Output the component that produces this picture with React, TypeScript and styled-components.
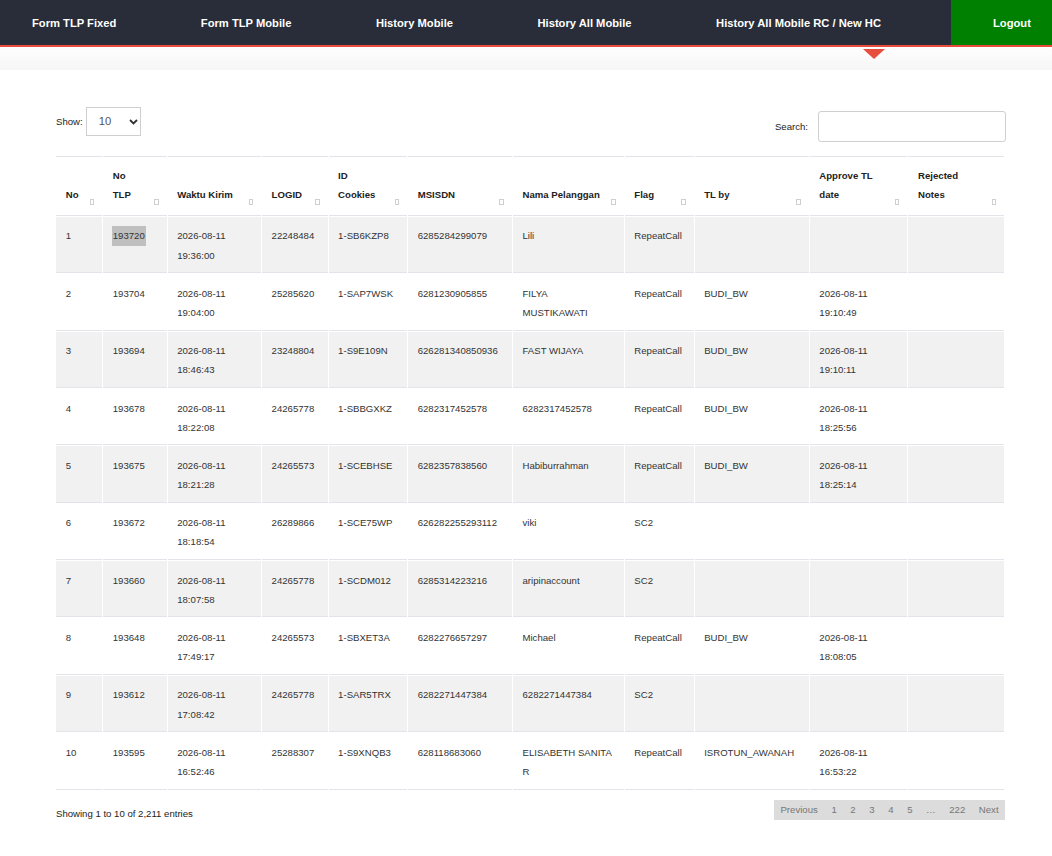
import React from "react";
import styled, { createGlobalStyle } from "styled-components";

const Global = createGlobalStyle`
  html, body { margin: 0; padding: 0; background: #fff; }
  body {
    font-family: "Liberation Sans", Arial, sans-serif;
    color: #333;
    font-size: 9.6px;
  }
  * { box-sizing: border-box; }
`;

const NavBar = styled.nav`
  display: flex;
  align-items: stretch;
  height: 47.2px;
  background: #282d39;
  border-bottom: 2px solid #e74c3c;
`;

const NavList = styled.div`
  display: flex;
  align-items: center;
  gap: 84.5px;
  padding-left: 32px;
`;

const NavItem = styled.a<{ $active?: boolean }>`
  position: relative;
  color: #fff;
  font-weight: 700;
  font-size: 11.2px;
  white-space: nowrap;
  text-decoration: none;
`;

const ActiveMark = styled.span`
  position: absolute;
  right: -4px;
  top: calc(100% + 20.5px);
  width: 0;
  height: 0;
  border-left: 11px solid transparent;
  border-right: 11px solid transparent;
  border-top: 10px solid #e74c3c;
`;

const Logout = styled.a`
  margin-left: auto;
  width: 101px;
  flex-shrink: 0;
  display: flex;
  align-items: center;
  padding-left: 42px;
  background: #008000;
  color: #fff;
  font-weight: 700;
  font-size: 11.2px;
  text-decoration: none;
`;

const Strip = styled.div`
  height: 22.4px;
  background: linear-gradient(#fefefe, #f6f6f6);
`;

const Main = styled.main`
  margin-left: 55.2px;
  width: 952px;
  padding-top: 37.6px;
`;

const Controls = styled.div`
  display: flex;
  justify-content: space-between;
  align-items: flex-start;
  padding: 0 0.8px;
`;

const LengthBox = styled.label`
  display: flex;
  align-items: center;
  gap: 3px;
  font-size: 9.6px;
  color: #222;
`;

const SelectWrap = styled.span`
  position: relative;
  display: inline-block;
`;

const Select = styled.select`
  appearance: none;
  -webkit-appearance: none;
  width: 55.7px;
  height: 28.4px;
  border: 1px solid #cfcfcf;
  border-radius: 0;
  background: #fff;
  padding: 0 0 0 12px;
  font-family: "Liberation Sans", Arial, sans-serif;
  font-size: 11.2px;
  color: #555;
  outline: none;
`;

const Chevron = styled.svg`
  position: absolute;
  right: 3px;
  top: 11.5px;
  pointer-events: none;
`;

const FilterBox = styled.label`
  display: flex;
  align-items: center;
  gap: 10px;
  margin-top: 3.7px;
  font-size: 9.6px;
  color: #222;
`;

const SearchInput = styled.input`
  width: 188.4px;
  height: 30.7px;
  border: 1px solid #cfcfcf;
  border-radius: 3px;
  outline: none;
`;

const Table = styled.table`
  margin-top: 13.2px;
  width: 950.1px;
  table-layout: fixed;
  border-collapse: separate;
  border-spacing: 1.6px;
  font-size: 9.6px;
  line-height: 19.2px;
`;

const Col = styled.col<{ $w: number }>`
  width: ${(p) => p.$w}px;
`;

const Th = styled.th`
  position: relative;
  text-align: left;
  vertical-align: bottom;
  font-weight: 700;
  color: #222;
  padding: 9px 20px 10.6px 9.6px;
  border-top: 1.6px solid #e4e3ea;
  border-bottom: 1.6px solid #e4e3ea;
  white-space: nowrap;
`;

const SortIcon = styled.span`
  position: absolute;
  right: 8px;
  bottom: 10px;
  width: 4.5px;
  height: 6px;
  border: 1px solid #cfcfcf;
`;

const Tr = styled.tr<{ $odd: boolean }>`
  background: ${(p) => (p.$odd ? "#f1f1f1" : "#ffffff")};
`;

const Td = styled.td`
  vertical-align: top;
  padding: 9.6px 9.6px 7.4px 9.6px;
  border-bottom: 1.6px solid #e4e3ea;
  color: #333;
  white-space: pre-line;
`;

const Selected = styled.span`
  display: inline-block;
  background: #bfbfbf;
  margin-left: -1px;
  padding: 0 1px;
`;

const Footer = styled.div`
  display: flex;
  justify-content: space-between;
  align-items: flex-start;
  margin-top: 9.5px;
  padding: 0 0.8px;
`;

const Info = styled.div`
  padding-top: 3.4px;
  line-height: 19.2px;
  color: #222;
`;

const Pager = styled.div`
  display: flex;
  height: 20px;
  line-height: 20px;
  background: #dcdcdc;
  color: #777;
  margin-right: 1px;
`;

const PageBtn = styled.span`
  padding: 0 6.8px;
`;

const cols = [45.6, 63, 92.7, 65, 78, 103, 110, 68.3, 113.3, 97, 95];

const headers = [
  "No",
  "No\nTLP",
  "Waktu Kirim",
  "LOGID",
  "ID\nCookies",
  "MSISDN",
  "Nama Pelanggan",
  "Flag",
  "TL by",
  "Approve TL\ndate",
  "Rejected\nNotes",
];

const rows: string[][] = [
  ["1", "193720", "2026-08-11\n19:36:00", "22248484", "1-SB6KZP8", "6285284299079", "Lili", "RepeatCall", "", "", ""],
  ["2", "193704", "2026-08-11\n19:04:00", "25285620", "1-SAP7WSK", "6281230905855", "FILYA\nMUSTIKAWATI", "RepeatCall", "BUDI_BW", "2026-08-11\n19:10:49", ""],
  ["3", "193694", "2026-08-11\n18:46:43", "23248804", "1-S9E109N", "626281340850936", "FAST WIJAYA", "RepeatCall", "BUDI_BW", "2026-08-11\n19:10:11", ""],
  ["4", "193678", "2026-08-11\n18:22:08", "24265778", "1-SBBGXKZ", "6282317452578", "6282317452578", "RepeatCall", "BUDI_BW", "2026-08-11\n18:25:56", ""],
  ["5", "193675", "2026-08-11\n18:21:28", "24265573", "1-SCEBHSE", "6282357838560", "Habiburrahman", "RepeatCall", "BUDI_BW", "2026-08-11\n18:25:14", ""],
  ["6", "193672", "2026-08-11\n18:18:54", "26289866", "1-SCE75WP", "626282255293112", "viki", "SC2", "", "", ""],
  ["7", "193660", "2026-08-11\n18:07:58", "24265778", "1-SCDM012", "6285314223216", "aripinaccount", "SC2", "", "", ""],
  ["8", "193648", "2026-08-11\n17:49:17", "24265573", "1-SBXET3A", "6282276657297", "Michael", "RepeatCall", "BUDI_BW", "2026-08-11\n18:08:05", ""],
  ["9", "193612", "2026-08-11\n17:08:42", "24265778", "1-SAR5TRX", "6282271447384", "6282271447384", "SC2", "", "", ""],
  ["10", "193595", "2026-08-11\n16:52:46", "25288307", "1-S9XNQB3", "628118683060", "ELISABETH SANITA\nR", "RepeatCall", "ISROTUN_AWANAH", "2026-08-11\n16:53:22", ""],
];

const navItems = ["Form TLP Fixed", "Form TLP Mobile", "History Mobile", "History All Mobile", "History All Mobile RC / New HC"];

export default function App() {
  return (
    <>
      <Global />
      <NavBar>
        <NavList>
          {navItems.map((n, i) => (
            <NavItem key={n} $active={i === 4}>
              {n}
              {i === 4 && <ActiveMark />}
            </NavItem>
          ))}
        </NavList>
        <Logout>Logout</Logout>
      </NavBar>
      <Strip />
      <Main>
        <Controls>
          <LengthBox>
            Show:
            <SelectWrap>
              <Select defaultValue="10">
                <option value="10">10</option>
                <option value="25">25</option>
                <option value="50">50</option>
                <option value="100">100</option>
              </Select>
              <Chevron width="9" height="6" viewBox="0 0 9 6">
                <path d="M1 1 L4.5 4.5 L8 1" fill="none" stroke="#333" strokeWidth="1.8" />
              </Chevron>
            </SelectWrap>
          </LengthBox>
          <FilterBox>
            Search:
            <SearchInput type="search" />
          </FilterBox>
        </Controls>
        <Table>
          <colgroup>
            {cols.map((w, i) => (
              <Col key={i} $w={w} />
            ))}
          </colgroup>
          <thead>
            <tr>
              {headers.map((h) => (
                <Th key={h}>
                  {h.split("\n").map((line, i, arr) => (
                    <React.Fragment key={i}>
                      {line}
                      {i < arr.length - 1 && <br />}
                    </React.Fragment>
                  ))}
                  <SortIcon />
                </Th>
              ))}
            </tr>
          </thead>
          <tbody>
            {rows.map((r, ri) => (
              <Tr key={ri} $odd={ri % 2 === 0}>
                {r.map((c, ci) => (
                  <Td key={ci}>{ri === 0 && ci === 1 ? <Selected>{c}</Selected> : c}</Td>
                ))}
              </Tr>
            ))}
          </tbody>
        </Table>
        <Footer>
          <Info>Showing 1 to 10 of 2,211 entries</Info>
          <Pager>
            <PageBtn>Previous</PageBtn>
            <PageBtn>1</PageBtn>
            <PageBtn>2</PageBtn>
            <PageBtn>3</PageBtn>
            <PageBtn>4</PageBtn>
            <PageBtn>5</PageBtn>
            <PageBtn>…</PageBtn>
            <PageBtn>222</PageBtn>
            <PageBtn>Next</PageBtn>
          </Pager>
        </Footer>
      </Main>
    </>
  );
}
